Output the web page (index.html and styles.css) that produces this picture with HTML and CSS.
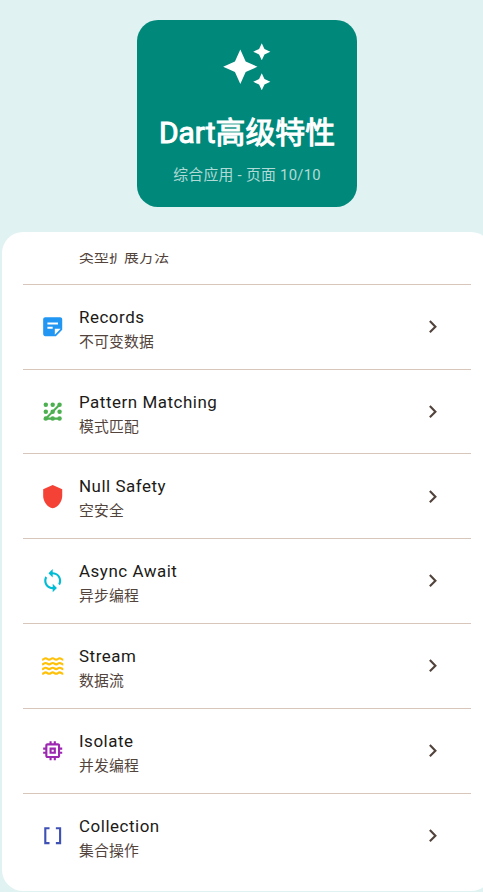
FILE: index.html
```
<!DOCTYPE html>
<html lang="zh-CN">
<head>
    <meta charset="UTF-8">
    <meta name="viewport" content="width=device-width, initial-scale=1.0">
    <title>Dart高级特性</title>
    <link rel="stylesheet" href="styles.css">
</head>
<body>

<svg class="sprite">
    <symbol id="chevron" viewBox="0 0 24 24"><path d="M10 6 8.59 7.41 13.17 12l-4.58 4.59L10 18l6-6z"/></symbol>
</svg>

<header class="hero">
    <svg class="hero-icon" viewBox="0 0 24 24"><path d="m19 9 1.25-2.75L23 5l-2.75-1.25L19 1l-1.25 2.75L15 5l2.75 1.25zM19 15l-1.25 2.75L15 19l2.75 1.25L19 23l1.25-2.75L23 19l-2.75-1.25zM11.5 9.5 9 4 6.5 9.5 1 12l5.5 2.5L9 20l2.5-5.5L17 12z"/></svg>
    <h1>Dart高级特性</h1>
    <p>综合应用 - 页面 10/10</p>
</header>

<main class="panel">
    <div class="list">
        <div class="item">
            <div class="text"><p>类型扩展方法</p></div>
        </div>
        <div class="item">
            <svg class="icon blue" viewBox="0 0 24 24"><path fill-rule="evenodd" d="M19 3H4.99C3.89 3 3 3.9 3 5v14c0 1.1.89 2 1.99 2H15l6-6V5c0-1.1-.9-2-2-2zM7 8h10v2H7zm5 6H7v-2h5zm2 5.5V14h5.5z"/></svg>
            <div class="text"><h2>Records</h2><p>不可变数据</p></div>
            <svg class="chevron"><use href="#chevron"/></svg>
        </div>
        <div class="item">
            <svg class="icon green" viewBox="0 0 24 24">
                <circle cx="5.5" cy="5.5" r="2.1"/><circle cx="12" cy="5.5" r="2.1"/><circle cx="18.5" cy="5.5" r="2.1"/>
                <circle cx="5.5" cy="12" r="2.1"/><circle cx="12" cy="12" r="2.1"/><circle cx="18.5" cy="12" r="2.1"/>
                <circle cx="5.5" cy="18.5" r="2.1"/><circle cx="12" cy="18.5" r="2.1"/><circle cx="18.5" cy="18.5" r="2.1"/>
                <path class="line" d="M18.5 5.5l-13 13h13"/>
            </svg>
            <div class="text"><h2>Pattern Matching</h2><p>模式匹配</p></div>
            <svg class="chevron"><use href="#chevron"/></svg>
        </div>
        <div class="item">
            <svg class="icon red" viewBox="0 0 24 24"><path d="M12 1 3 5v6c0 5.55 3.84 10.74 9 12 5.16-1.26 9-6.45 9-12V5z"/></svg>
            <div class="text"><h2>Null Safety</h2><p>空安全</p></div>
            <svg class="chevron"><use href="#chevron"/></svg>
        </div>
        <div class="item">
            <svg class="icon cyan" viewBox="0 0 24 24"><path d="M12 4V1L8 5l4 4V6c3.31 0 6 2.69 6 6 0 1.01-.25 1.97-.7 2.8l1.46 1.46C19.54 15.03 20 13.57 20 12c0-4.42-3.58-8-8-8zm0 14c-3.31 0-6-2.69-6-6 0-1.01.25-1.97.7-2.8L5.24 7.74C4.46 8.97 4 10.43 4 12c0 4.42 3.58 8 8 8v3l4-4-4-4z"/></svg>
            <div class="text"><h2>Async Await</h2><p>异步编程</p></div>
            <svg class="chevron"><use href="#chevron"/></svg>
        </div>
        <div class="item">
            <svg class="icon amber" viewBox="0 0 24 24">
                <defs><path id="wave" class="line" d="M2 6.3c1.7 0 1.7-1.3 3.35-1.3s1.65 1.3 3.3 1.3 1.7-1.3 3.35-1.3 1.65 1.3 3.3 1.3 1.7-1.3 3.35-1.3 1.65 1.3 3.35 1.3"/></defs>
                <use href="#wave"/><use href="#wave" y="4.45"/><use href="#wave" y="8.9"/><use href="#wave" y="13.35"/>
            </svg>
            <div class="text"><h2>Stream</h2><p>数据流</p></div>
            <svg class="chevron"><use href="#chevron"/></svg>
        </div>
        <div class="item">
            <svg class="icon purple" viewBox="0 0 24 24"><path fill-rule="evenodd" d="M15 9H9v6h6zm-2 4h-2v-2h2zm8-2V9h-2V7c0-1.1-.9-2-2-2h-2V3h-2v2h-2V3H9v2H7c-1.1 0-2 .9-2 2v2H3v2h2v2H3v2h2v2c0 1.1.9 2 2 2h2v2h2v-2h2v2h2v-2h2c1.1 0 2-.9 2-2v-2h2v-2h-2v-2zm-4 6H7V7h10z"/></svg>
            <div class="text"><h2>Isolate</h2><p>并发编程</p></div>
            <svg class="chevron"><use href="#chevron"/></svg>
        </div>
        <div class="item">
            <svg class="icon indigo" viewBox="0 0 24 24"><path d="M15 4v2h3v12h-3v2h5V4zM4 20h5v-2H6V6h3V4H4z"/></svg>
            <div class="text"><h2>Collection</h2><p>集合操作</p></div>
            <svg class="chevron"><use href="#chevron"/></svg>
        </div>
    </div>
</main>

</body>
</html>
```
FILE: styles.css
```
* {
    box-sizing: border-box;
}
body {
    font-family: Roboto, 'Noto Sans CJK SC', sans-serif;
    background-color: #e0f2f1;
    margin: 0;
    padding: 20.3px 0 0 2.3px;
    height: 892px;
    overflow: hidden;
}
h1, h2, p {
    margin: 0;
    font-weight: 400;
    white-space: nowrap;
}
.sprite {
    display: none;
}
.hero {
    width: 219.3px;
    height: 186.5px;
    margin-left: 135.1px;
    padding-top: 21px;
    background: #00897b;
    border-radius: 21px;
    color: white;
    text-align: center;
}
.hero-icon {
    display: block;
    width: 51.5px;
    height: 51.5px;
    margin: 0 auto;
    fill: white;
}
.hero h1 {
    margin-top: 18.5px;
    font-size: 29.9px;
    line-height: 44px;
    -webkit-text-stroke: 1px white;
}
.hero p {
    margin-top: 9px;
    font-size: 14.84px;
    line-height: 22px;
    letter-spacing: 0.27px;
    color: rgba(255, 255, 255, 0.7);
}
.panel {
    width: 490px;
    height: 658.5px;
    margin-top: 25.4px;
    padding: 21px;
    background: white;
    border-radius: 21px;
}
.list {
    height: 617px;
    overflow: hidden;
}
.item {
    display: flex;
    align-items: center;
    height: 84.8px;
    padding: 0 26px 0 17px;
    border-bottom: 1px solid #d8c6ba;
}
/* list is scrolled past most of its first row */
.item:first-child {
    align-items: flex-start;
    height: 31.7px;
    padding-left: 42.4px;
}
.item:first-child .text {
    margin-top: -8.5px;
    padding-top: 0;
}
.item:last-child {
    border-bottom: none;
    height: 83.8px;
}
.icon, .chevron {
    flex: none;
    width: 25.4px;
    height: 25.4px;
}
.chevron {
    fill: #52443c;
}
.text {
    flex: 1;
    margin-left: 13.3px;
    padding-top: 5px;
}
.text h2 {
    font-size: 16.96px;
    line-height: 25px;
    letter-spacing: 0.53px;
    color: #201a17;
}
.text p {
    font-size: 14.84px;
    line-height: 24px;
    letter-spacing: 0.2px;
    color: #52443c;
}
.line {
    fill: none;
    stroke: currentColor;
    stroke-width: 2;
}
.icon {
    fill: currentColor;
}
.blue {
    color: #2196f3;
}
.green {
    color: #4caf50;
}
.red {
    color: #f44336;
}
.cyan {
    color: #00bcd4;
}
.amber {
    color: #ffc107;
}
.purple {
    color: #9c27b0;
}
.indigo {
    color: #3f51b5;
}
```
